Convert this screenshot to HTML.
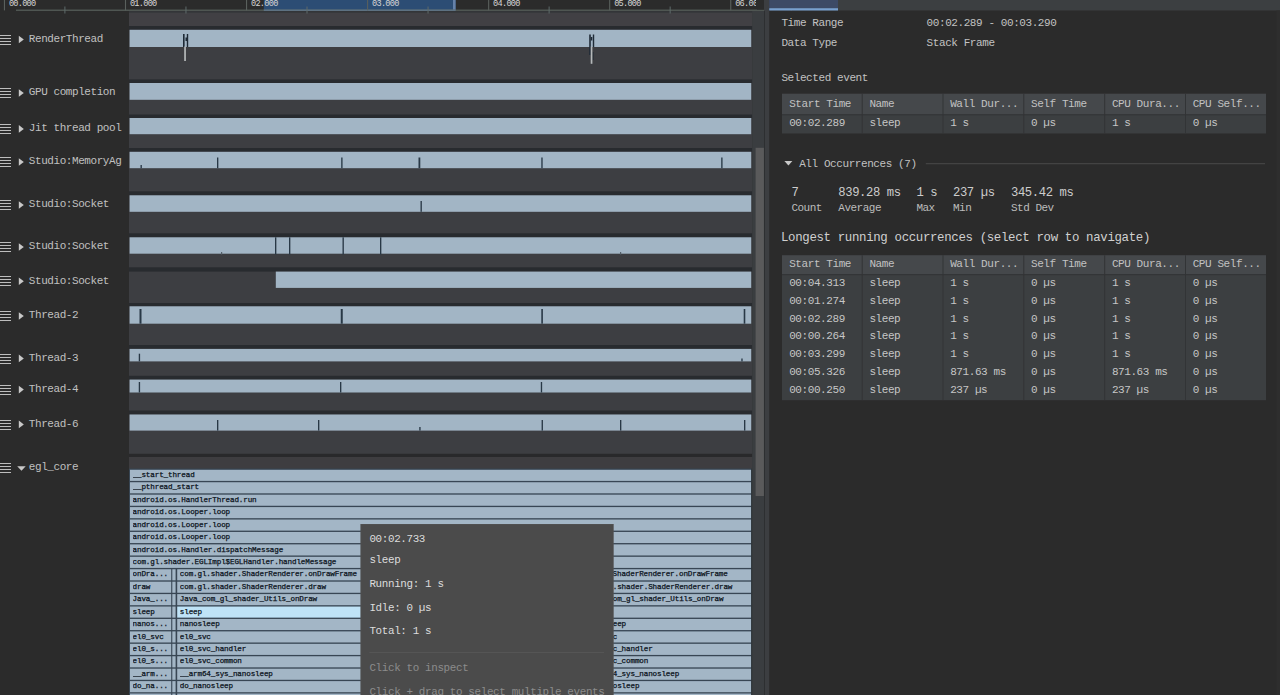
<!DOCTYPE html>
<html><head><meta charset="utf-8"><style>
html,body{margin:0;padding:0;width:1280px;height:695px;overflow:hidden;background:#2b2b2b}
div,span,svg{position:absolute;display:block}
span{font-family:"Liberation Mono", monospace;line-height:1;white-space:pre}
</style></head><body>
<svg width="1280" height="695" viewBox="0 0 1280 695" style="left:0;top:0"><rect x="0.00" y="0.00" width="1280.00" height="695.00" fill="#2b2b2b"/><rect x="129.00" y="11.00" width="623.20" height="684.00" fill="#3d3e42"/><rect x="129.00" y="11.00" width="623.60" height="15.00" fill="#414044"/><rect x="129.00" y="10.80" width="623.60" height="1.80" fill="#333538"/><rect x="263.80" y="0.00" width="191.80" height="10.40" fill="#2c4d74"/><rect x="453.00" y="0.00" width="2.60" height="10.40" fill="#6682aa"/><rect x="16.00" y="9.60" width="748.00" height="1.20" fill="#59615c"/><rect x="263.80" y="9.60" width="191.80" height="1.20" fill="#62788c"/><rect x="3.90" y="0.00" width="1.10" height="10.40" fill="#5a605d"/><rect x="64.40" y="6.50" width="1.00" height="7.00" fill="#5e6a6a"/><rect x="124.95" y="0.00" width="1.10" height="10.40" fill="#5a605d"/><rect x="185.45" y="6.50" width="1.00" height="7.00" fill="#5e6a6a"/><rect x="246.00" y="0.00" width="1.10" height="10.40" fill="#5a605d"/><rect x="306.50" y="6.50" width="1.00" height="7.00" fill="#5e6a6a"/><rect x="367.05" y="0.00" width="1.10" height="10.40" fill="#5a605d"/><rect x="427.55" y="6.50" width="1.00" height="7.00" fill="#5e6a6a"/><rect x="488.10" y="0.00" width="1.10" height="10.40" fill="#5a605d"/><rect x="548.60" y="6.50" width="1.00" height="7.00" fill="#5e6a6a"/><rect x="609.15" y="0.00" width="1.10" height="10.40" fill="#5a605d"/><rect x="669.65" y="6.50" width="1.00" height="7.00" fill="#5e6a6a"/><rect x="730.20" y="0.00" width="1.10" height="10.40" fill="#5a605d"/><rect x="790.70" y="6.50" width="1.00" height="7.00" fill="#5e6a6a"/><rect x="129.00" y="26.00" width="623.60" height="3.80" fill="#282b2f"/><rect x="129.60" y="29.80" width="621.60" height="17.20" fill="#a2b5c5"/><rect x="0.00" y="35.00" width="11.00" height="1.00" fill="#bdbdbd"/><rect x="0.00" y="38.00" width="11.00" height="1.00" fill="#bdbdbd"/><rect x="0.00" y="41.00" width="11.00" height="1.00" fill="#bdbdbd"/><rect x="0.00" y="44.00" width="11.00" height="1.00" fill="#bdbdbd"/><path d="M18.8 35.70 L23.8 39.50 L18.8 43.30 Z" fill="#c8c8c8"/><rect x="129.00" y="79.40" width="623.60" height="3.60" fill="#282b2f"/><rect x="129.60" y="83.00" width="621.60" height="16.80" fill="#a2b5c5"/><rect x="0.00" y="88.00" width="11.00" height="1.00" fill="#bdbdbd"/><rect x="0.00" y="91.00" width="11.00" height="1.00" fill="#bdbdbd"/><rect x="0.00" y="94.00" width="11.00" height="1.00" fill="#bdbdbd"/><rect x="0.00" y="97.00" width="11.00" height="1.00" fill="#bdbdbd"/><path d="M18.8 89.20 L23.8 93.00 L18.8 96.80 Z" fill="#c8c8c8"/><rect x="129.00" y="114.50" width="623.60" height="3.50" fill="#282b2f"/><rect x="129.60" y="118.00" width="621.60" height="16.20" fill="#a2b5c5"/><rect x="0.00" y="124.00" width="11.00" height="1.00" fill="#bdbdbd"/><rect x="0.00" y="127.00" width="11.00" height="1.00" fill="#bdbdbd"/><rect x="0.00" y="130.00" width="11.00" height="1.00" fill="#bdbdbd"/><rect x="0.00" y="133.00" width="11.00" height="1.00" fill="#bdbdbd"/><path d="M18.8 125.10 L23.8 128.90 L18.8 132.70 Z" fill="#c8c8c8"/><rect x="129.00" y="148.00" width="623.60" height="3.80" fill="#282b2f"/><rect x="129.60" y="151.80" width="621.60" height="16.40" fill="#a2b5c5"/><rect x="0.00" y="157.00" width="11.00" height="1.00" fill="#bdbdbd"/><rect x="0.00" y="160.00" width="11.00" height="1.00" fill="#bdbdbd"/><rect x="0.00" y="163.00" width="11.00" height="1.00" fill="#bdbdbd"/><rect x="0.00" y="166.00" width="11.00" height="1.00" fill="#bdbdbd"/><path d="M18.8 158.20 L23.8 162.00 L18.8 165.80 Z" fill="#c8c8c8"/><rect x="129.00" y="191.30" width="623.60" height="4.00" fill="#282b2f"/><rect x="129.60" y="195.30" width="621.60" height="16.50" fill="#a2b5c5"/><rect x="0.00" y="200.00" width="11.00" height="1.00" fill="#bdbdbd"/><rect x="0.00" y="203.00" width="11.00" height="1.00" fill="#bdbdbd"/><rect x="0.00" y="206.00" width="11.00" height="1.00" fill="#bdbdbd"/><rect x="0.00" y="209.00" width="11.00" height="1.00" fill="#bdbdbd"/><path d="M18.8 201.20 L23.8 205.00 L18.8 208.80 Z" fill="#c8c8c8"/><rect x="129.00" y="233.30" width="623.60" height="4.00" fill="#282b2f"/><rect x="129.60" y="237.30" width="621.60" height="16.40" fill="#a2b5c5"/><rect x="0.00" y="242.00" width="11.00" height="1.00" fill="#bdbdbd"/><rect x="0.00" y="245.00" width="11.00" height="1.00" fill="#bdbdbd"/><rect x="0.00" y="248.00" width="11.00" height="1.00" fill="#bdbdbd"/><rect x="0.00" y="251.00" width="11.00" height="1.00" fill="#bdbdbd"/><path d="M18.8 243.20 L23.8 247.00 L18.8 250.80 Z" fill="#c8c8c8"/><rect x="129.00" y="267.30" width="623.60" height="4.30" fill="#282b2f"/><rect x="275.80" y="271.60" width="475.40" height="16.30" fill="#a2b5c5"/><rect x="0.00" y="276.00" width="11.00" height="1.00" fill="#bdbdbd"/><rect x="0.00" y="279.00" width="11.00" height="1.00" fill="#bdbdbd"/><rect x="0.00" y="282.00" width="11.00" height="1.00" fill="#bdbdbd"/><rect x="0.00" y="285.00" width="11.00" height="1.00" fill="#bdbdbd"/><path d="M18.8 277.50 L23.8 281.30 L18.8 285.10 Z" fill="#c8c8c8"/><rect x="129.00" y="303.00" width="623.60" height="3.30" fill="#282b2f"/><rect x="129.60" y="306.30" width="621.60" height="17.40" fill="#a2b5c5"/><rect x="0.00" y="311.00" width="11.00" height="1.00" fill="#bdbdbd"/><rect x="0.00" y="314.00" width="11.00" height="1.00" fill="#bdbdbd"/><rect x="0.00" y="317.00" width="11.00" height="1.00" fill="#bdbdbd"/><rect x="0.00" y="320.00" width="11.00" height="1.00" fill="#bdbdbd"/><path d="M18.8 312.20 L23.8 316.00 L18.8 319.80 Z" fill="#c8c8c8"/><rect x="129.00" y="345.00" width="623.60" height="3.90" fill="#282b2f"/><rect x="129.60" y="348.90" width="621.60" height="12.50" fill="#a2b5c5"/><rect x="0.00" y="354.00" width="11.00" height="1.00" fill="#bdbdbd"/><rect x="0.00" y="357.00" width="11.00" height="1.00" fill="#bdbdbd"/><rect x="0.00" y="360.00" width="11.00" height="1.00" fill="#bdbdbd"/><rect x="0.00" y="363.00" width="11.00" height="1.00" fill="#bdbdbd"/><path d="M18.8 354.60 L23.8 358.40 L18.8 362.20 Z" fill="#c8c8c8"/><rect x="129.00" y="375.80" width="623.60" height="3.80" fill="#282b2f"/><rect x="129.60" y="379.60" width="621.60" height="12.90" fill="#a2b5c5"/><rect x="0.00" y="385.00" width="11.00" height="1.00" fill="#bdbdbd"/><rect x="0.00" y="388.00" width="11.00" height="1.00" fill="#bdbdbd"/><rect x="0.00" y="391.00" width="11.00" height="1.00" fill="#bdbdbd"/><rect x="0.00" y="394.00" width="11.00" height="1.00" fill="#bdbdbd"/><path d="M18.8 385.80 L23.8 389.60 L18.8 393.40 Z" fill="#c8c8c8"/><rect x="129.00" y="410.50" width="623.60" height="4.00" fill="#282b2f"/><rect x="129.60" y="414.50" width="621.60" height="16.10" fill="#a2b5c5"/><rect x="0.00" y="420.00" width="11.00" height="1.00" fill="#bdbdbd"/><rect x="0.00" y="423.00" width="11.00" height="1.00" fill="#bdbdbd"/><rect x="0.00" y="426.00" width="11.00" height="1.00" fill="#bdbdbd"/><rect x="0.00" y="429.00" width="11.00" height="1.00" fill="#bdbdbd"/><path d="M18.8 420.60 L23.8 424.40 L18.8 428.20 Z" fill="#c8c8c8"/><rect x="183.00" y="34.00" width="1.60" height="13.00" fill="#1e2a36"/><rect x="186.80" y="34.00" width="1.40" height="13.00" fill="#1e2a36"/><rect x="185.50" y="37.50" width="2.50" height="3.50" fill="#1e2a36"/><rect x="589.20" y="34.50" width="1.60" height="20.50" fill="#1e2a36"/><rect x="592.80" y="34.50" width="1.40" height="12.50" fill="#1e2a36"/><rect x="590.80" y="37.00" width="1.50" height="3.50" fill="#1e2a36"/><rect x="592.50" y="52.00" width="1.30" height="8.00" fill="#2a3038"/><rect x="140.50" y="165.00" width="1.35" height="3.20" fill="#283846"/><rect x="217.00" y="157.50" width="1.35" height="10.70" fill="#283846"/><rect x="341.20" y="157.50" width="1.35" height="10.70" fill="#283846"/><rect x="418.50" y="157.50" width="1.80" height="10.70" fill="#283846"/><rect x="541.30" y="157.50" width="1.35" height="10.70" fill="#283846"/><rect x="721.20" y="157.50" width="1.35" height="10.70" fill="#283846"/><rect x="420.50" y="201.00" width="1.35" height="10.80" fill="#283846"/><rect x="275.00" y="237.30" width="1.35" height="17.20" fill="#283846"/><rect x="289.00" y="237.30" width="1.35" height="17.20" fill="#283846"/><rect x="342.50" y="237.30" width="1.35" height="17.20" fill="#283846"/><rect x="380.00" y="237.30" width="1.35" height="17.20" fill="#283846"/><rect x="221.00" y="252.00" width="1.20" height="2.50" fill="#55606a"/><rect x="620.00" y="252.00" width="1.20" height="2.50" fill="#55606a"/><rect x="139.50" y="309.00" width="2.00" height="14.70" fill="#283846"/><rect x="340.75" y="309.00" width="2.00" height="14.70" fill="#283846"/><rect x="541.30" y="309.00" width="1.60" height="14.70" fill="#283846"/><rect x="743.70" y="309.00" width="1.60" height="14.70" fill="#283846"/><rect x="138.75" y="353.70" width="1.35" height="7.70" fill="#283846"/><rect x="741.30" y="358.50" width="1.35" height="2.90" fill="#283846"/><rect x="138.75" y="382.00" width="1.35" height="10.50" fill="#283846"/><rect x="340.00" y="382.00" width="1.35" height="10.50" fill="#283846"/><rect x="540.80" y="382.00" width="1.35" height="10.50" fill="#283846"/><rect x="217.00" y="420.00" width="1.35" height="10.60" fill="#283846"/><rect x="318.00" y="420.00" width="1.35" height="10.60" fill="#283846"/><rect x="419.25" y="427.00" width="1.35" height="3.60" fill="#283846"/><rect x="541.60" y="420.00" width="1.35" height="10.60" fill="#283846"/><rect x="620.00" y="420.00" width="1.35" height="10.60" fill="#283846"/><rect x="744.00" y="420.00" width="1.35" height="10.60" fill="#283846"/><rect x="184.20" y="46.60" width="1.70" height="14.40" fill="#b5b8ba"/><rect x="590.70" y="46.60" width="1.70" height="17.20" fill="#b5b8ba"/><rect x="129.00" y="453.80" width="623.60" height="3.20" fill="#29292b"/><rect x="129.00" y="457.00" width="623.60" height="11.60" fill="#3e3d40"/><rect x="129.00" y="468.60" width="622.20" height="226.40" fill="#384654"/><rect x="0.00" y="463.00" width="11.00" height="1.00" fill="#bdbdbd"/><rect x="0.00" y="466.00" width="11.00" height="1.00" fill="#bdbdbd"/><rect x="0.00" y="469.00" width="11.00" height="1.00" fill="#bdbdbd"/><rect x="0.00" y="472.00" width="11.00" height="1.00" fill="#bdbdbd"/><path d="M17.2 466.3 L25.7 466.3 L21.45 470.8 Z" fill="#c8c8c8"/><rect x="130.00" y="469.80" width="621.20" height="11.10" fill="#a3b6c6"/><rect x="130.00" y="482.23" width="621.20" height="11.10" fill="#a3b6c6"/><rect x="130.00" y="494.66" width="621.20" height="11.10" fill="#a3b6c6"/><rect x="130.00" y="507.09" width="621.20" height="11.10" fill="#a3b6c6"/><rect x="130.00" y="519.52" width="621.20" height="11.10" fill="#a3b6c6"/><rect x="130.00" y="531.95" width="621.20" height="11.10" fill="#a3b6c6"/><rect x="130.00" y="544.38" width="621.20" height="11.10" fill="#a3b6c6"/><rect x="130.00" y="556.81" width="621.20" height="11.10" fill="#a3b6c6"/><rect x="130.00" y="569.24" width="41.20" height="11.10" fill="#a3b6c6"/><rect x="172.30" y="569.24" width="3.30" height="11.10" fill="#a3b6c6"/><rect x="177.20" y="569.24" width="322.80" height="11.10" fill="#a3b6c6"/><rect x="548.00" y="569.24" width="203.20" height="11.10" fill="#a3b6c6"/><rect x="130.00" y="581.67" width="41.20" height="11.10" fill="#a3b6c6"/><rect x="172.30" y="581.67" width="3.30" height="11.10" fill="#a3b6c6"/><rect x="177.20" y="581.67" width="322.80" height="11.10" fill="#a3b6c6"/><rect x="583.60" y="581.67" width="167.60" height="11.10" fill="#a3b6c6"/><rect x="130.00" y="594.10" width="41.20" height="11.10" fill="#a3b6c6"/><rect x="172.30" y="594.10" width="3.30" height="11.10" fill="#a3b6c6"/><rect x="177.20" y="594.10" width="322.80" height="11.10" fill="#a3b6c6"/><rect x="583.60" y="594.10" width="167.60" height="11.10" fill="#a3b6c6"/><rect x="130.00" y="606.53" width="41.20" height="11.10" fill="#a3b6c6"/><rect x="172.30" y="606.53" width="3.30" height="11.10" fill="#a3b6c6"/><rect x="177.20" y="606.53" width="322.80" height="11.10" fill="#bfe3f7"/><rect x="583.60" y="606.53" width="167.60" height="11.10" fill="#a3b6c6"/><rect x="130.00" y="618.96" width="41.20" height="11.10" fill="#a3b6c6"/><rect x="172.30" y="618.96" width="3.30" height="11.10" fill="#a3b6c6"/><rect x="177.20" y="618.96" width="322.80" height="11.10" fill="#a3b6c6"/><rect x="583.60" y="618.96" width="167.60" height="11.10" fill="#a3b6c6"/><rect x="130.00" y="631.39" width="41.20" height="11.10" fill="#a3b6c6"/><rect x="172.30" y="631.39" width="3.30" height="11.10" fill="#a3b6c6"/><rect x="177.20" y="631.39" width="322.80" height="11.10" fill="#a3b6c6"/><rect x="583.60" y="631.39" width="167.60" height="11.10" fill="#a3b6c6"/><rect x="130.00" y="643.82" width="41.20" height="11.10" fill="#a3b6c6"/><rect x="172.30" y="643.82" width="3.30" height="11.10" fill="#a3b6c6"/><rect x="177.20" y="643.82" width="322.80" height="11.10" fill="#a3b6c6"/><rect x="583.60" y="643.82" width="167.60" height="11.10" fill="#a3b6c6"/><rect x="130.00" y="656.25" width="41.20" height="11.10" fill="#a3b6c6"/><rect x="172.30" y="656.25" width="3.30" height="11.10" fill="#a3b6c6"/><rect x="177.20" y="656.25" width="322.80" height="11.10" fill="#a3b6c6"/><rect x="583.60" y="656.25" width="167.60" height="11.10" fill="#a3b6c6"/><rect x="130.00" y="668.68" width="41.20" height="11.10" fill="#a3b6c6"/><rect x="172.30" y="668.68" width="3.30" height="11.10" fill="#a3b6c6"/><rect x="177.20" y="668.68" width="322.80" height="11.10" fill="#a3b6c6"/><rect x="583.60" y="668.68" width="167.60" height="11.10" fill="#a3b6c6"/><rect x="130.00" y="681.11" width="41.20" height="11.10" fill="#a3b6c6"/><rect x="172.30" y="681.11" width="3.30" height="11.10" fill="#a3b6c6"/><rect x="177.20" y="681.11" width="322.80" height="11.10" fill="#a3b6c6"/><rect x="583.60" y="681.11" width="167.60" height="11.10" fill="#a3b6c6"/><rect x="130.00" y="693.54" width="41.20" height="11.10" fill="#a3b6c6"/><rect x="172.30" y="693.54" width="3.30" height="11.10" fill="#a3b6c6"/><rect x="177.20" y="693.54" width="322.80" height="11.10" fill="#a3b6c6"/><rect x="583.60" y="693.54" width="167.60" height="11.10" fill="#a3b6c6"/></svg>
<span style="left:8.90px;top:0.30px;font-size:8.6px;color:#d6d6d6;letter-spacing:-0.73px">00.000</span>
<span style="left:129.95px;top:0.30px;font-size:8.6px;color:#d6d6d6;letter-spacing:-0.73px">01.000</span>
<span style="left:251.00px;top:0.30px;font-size:8.6px;color:#d6d6d6;letter-spacing:-0.73px">02.000</span>
<span style="left:372.05px;top:0.30px;font-size:8.6px;color:#d6d6d6;letter-spacing:-0.73px">03.000</span>
<span style="left:493.10px;top:0.30px;font-size:8.6px;color:#d6d6d6;letter-spacing:-0.73px">04.000</span>
<span style="left:614.15px;top:0.30px;font-size:8.6px;color:#d6d6d6;letter-spacing:-0.73px">05.000</span>
<span style="left:735.20px;top:0.30px;font-size:8.6px;color:#d6d6d6;letter-spacing:-0.73px;width:20.5px;overflow:hidden">06.000</span>
<span style="left:28.80px;top:33.90px;font-size:11.0px;color:#c0c0c0;letter-spacing:-0.43px">RenderThread</span>
<span style="left:28.80px;top:87.40px;font-size:11.0px;color:#c0c0c0;letter-spacing:-0.43px">GPU completion</span>
<span style="left:28.80px;top:123.30px;font-size:11.0px;color:#c0c0c0;letter-spacing:-0.43px">Jit thread pool</span>
<span style="left:28.80px;top:156.40px;font-size:11.0px;color:#c0c0c0;letter-spacing:-0.43px">Studio:MemoryAg</span>
<span style="left:28.80px;top:199.40px;font-size:11.0px;color:#c0c0c0;letter-spacing:-0.43px">Studio:Socket</span>
<span style="left:28.80px;top:241.40px;font-size:11.0px;color:#c0c0c0;letter-spacing:-0.43px">Studio:Socket</span>
<span style="left:28.80px;top:275.70px;font-size:11.0px;color:#c0c0c0;letter-spacing:-0.43px">Studio:Socket</span>
<span style="left:28.80px;top:310.40px;font-size:11.0px;color:#c0c0c0;letter-spacing:-0.43px">Thread-2</span>
<span style="left:28.80px;top:352.80px;font-size:11.0px;color:#c0c0c0;letter-spacing:-0.43px">Thread-3</span>
<span style="left:28.80px;top:384.00px;font-size:11.0px;color:#c0c0c0;letter-spacing:-0.43px">Thread-4</span>
<span style="left:28.80px;top:418.80px;font-size:11.0px;color:#c0c0c0;letter-spacing:-0.43px">Thread-6</span>
<span style="left:28.80px;top:462.40px;font-size:11.0px;color:#c0c0c0;letter-spacing:-0.43px">egl_core</span>
<span style="left:132.60px;top:472.00px;font-size:7.6px;color:#0c141c;letter-spacing:-0.130px;-webkit-text-stroke:0.25px #0c141c;width:618.60px;overflow:hidden;white-space:nowrap">__start_thread</span>
<span style="left:132.60px;top:484.43px;font-size:7.6px;color:#0c141c;letter-spacing:-0.130px;-webkit-text-stroke:0.25px #0c141c;width:618.60px;overflow:hidden;white-space:nowrap">__pthread_start</span>
<span style="left:132.60px;top:496.86px;font-size:7.6px;color:#0c141c;letter-spacing:-0.130px;-webkit-text-stroke:0.25px #0c141c;width:618.60px;overflow:hidden;white-space:nowrap">android.os.HandlerThread.run</span>
<span style="left:132.60px;top:509.29px;font-size:7.6px;color:#0c141c;letter-spacing:-0.130px;-webkit-text-stroke:0.25px #0c141c;width:618.60px;overflow:hidden;white-space:nowrap">android.os.Looper.loop</span>
<span style="left:132.60px;top:521.72px;font-size:7.6px;color:#0c141c;letter-spacing:-0.130px;-webkit-text-stroke:0.25px #0c141c;width:618.60px;overflow:hidden;white-space:nowrap">android.os.Looper.loop</span>
<span style="left:132.60px;top:534.15px;font-size:7.6px;color:#0c141c;letter-spacing:-0.130px;-webkit-text-stroke:0.25px #0c141c;width:618.60px;overflow:hidden;white-space:nowrap">android.os.Looper.loop</span>
<span style="left:132.60px;top:546.58px;font-size:7.6px;color:#0c141c;letter-spacing:-0.130px;-webkit-text-stroke:0.25px #0c141c;width:618.60px;overflow:hidden;white-space:nowrap">android.os.Handler.dispatchMessage</span>
<span style="left:132.60px;top:559.01px;font-size:7.6px;color:#0c141c;letter-spacing:-0.130px;-webkit-text-stroke:0.25px #0c141c;width:618.60px;overflow:hidden;white-space:nowrap">com.gl.shader.EGLImpl$EGLHandler.handleMessage</span>
<span style="left:132.60px;top:571.44px;font-size:7.6px;color:#0c141c;letter-spacing:-0.130px;-webkit-text-stroke:0.25px #0c141c;width:38.60px;overflow:hidden;white-space:nowrap">onDra...</span>
<span style="left:179.80px;top:571.44px;font-size:7.6px;color:#0c141c;letter-spacing:-0.130px;-webkit-text-stroke:0.25px #0c141c;width:320.20px;overflow:hidden;white-space:nowrap">com.gl.shader.ShaderRenderer.onDrawFrame</span>
<span style="left:550.60px;top:571.44px;font-size:7.6px;color:#0c141c;letter-spacing:-0.130px;-webkit-text-stroke:0.25px #0c141c;width:200.60px;overflow:hidden;white-space:nowrap">com.gl.shader.ShaderRenderer.onDrawFrame</span>
<span style="left:132.60px;top:583.87px;font-size:7.6px;color:#0c141c;letter-spacing:-0.130px;-webkit-text-stroke:0.25px #0c141c;width:38.60px;overflow:hidden;white-space:nowrap">draw</span>
<span style="left:179.80px;top:583.87px;font-size:7.6px;color:#0c141c;letter-spacing:-0.130px;-webkit-text-stroke:0.25px #0c141c;width:320.20px;overflow:hidden;white-space:nowrap">com.gl.shader.ShaderRenderer.draw</span>
<span style="left:586.20px;top:583.87px;font-size:7.6px;color:#0c141c;letter-spacing:-0.130px;-webkit-text-stroke:0.25px #0c141c;width:165.00px;overflow:hidden;white-space:nowrap">com.gl.shader.ShaderRenderer.draw</span>
<span style="left:132.60px;top:596.30px;font-size:7.6px;color:#0c141c;letter-spacing:-0.130px;-webkit-text-stroke:0.25px #0c141c;width:38.60px;overflow:hidden;white-space:nowrap">Java_...</span>
<span style="left:179.80px;top:596.30px;font-size:7.6px;color:#0c141c;letter-spacing:-0.130px;-webkit-text-stroke:0.25px #0c141c;width:320.20px;overflow:hidden;white-space:nowrap">Java_com_gl_shader_Utils_onDraw</span>
<span style="left:586.20px;top:596.30px;font-size:7.6px;color:#0c141c;letter-spacing:-0.130px;-webkit-text-stroke:0.25px #0c141c;width:165.00px;overflow:hidden;white-space:nowrap">Java_com_gl_shader_Utils_onDraw</span>
<span style="left:132.60px;top:608.73px;font-size:7.6px;color:#0c141c;letter-spacing:-0.130px;-webkit-text-stroke:0.25px #0c141c;width:38.60px;overflow:hidden;white-space:nowrap">sleep</span>
<span style="left:179.80px;top:608.73px;font-size:7.6px;color:#0c141c;letter-spacing:-0.130px;-webkit-text-stroke:0.25px #0c141c;width:320.20px;overflow:hidden;white-space:nowrap">sleep</span>
<span style="left:586.20px;top:608.73px;font-size:7.6px;color:#0c141c;letter-spacing:-0.130px;-webkit-text-stroke:0.25px #0c141c;width:165.00px;overflow:hidden;white-space:nowrap">sleep</span>
<span style="left:132.60px;top:621.16px;font-size:7.6px;color:#0c141c;letter-spacing:-0.130px;-webkit-text-stroke:0.25px #0c141c;width:38.60px;overflow:hidden;white-space:nowrap">nanos...</span>
<span style="left:179.80px;top:621.16px;font-size:7.6px;color:#0c141c;letter-spacing:-0.130px;-webkit-text-stroke:0.25px #0c141c;width:320.20px;overflow:hidden;white-space:nowrap">nanosleep</span>
<span style="left:586.20px;top:621.16px;font-size:7.6px;color:#0c141c;letter-spacing:-0.130px;-webkit-text-stroke:0.25px #0c141c;width:165.00px;overflow:hidden;white-space:nowrap">nanosleep</span>
<span style="left:132.60px;top:633.59px;font-size:7.6px;color:#0c141c;letter-spacing:-0.130px;-webkit-text-stroke:0.25px #0c141c;width:38.60px;overflow:hidden;white-space:nowrap">el0_svc</span>
<span style="left:179.80px;top:633.59px;font-size:7.6px;color:#0c141c;letter-spacing:-0.130px;-webkit-text-stroke:0.25px #0c141c;width:320.20px;overflow:hidden;white-space:nowrap">el0_svc</span>
<span style="left:586.20px;top:633.59px;font-size:7.6px;color:#0c141c;letter-spacing:-0.130px;-webkit-text-stroke:0.25px #0c141c;width:165.00px;overflow:hidden;white-space:nowrap">el0_svc</span>
<span style="left:132.60px;top:646.02px;font-size:7.6px;color:#0c141c;letter-spacing:-0.130px;-webkit-text-stroke:0.25px #0c141c;width:38.60px;overflow:hidden;white-space:nowrap">el0_s...</span>
<span style="left:179.80px;top:646.02px;font-size:7.6px;color:#0c141c;letter-spacing:-0.130px;-webkit-text-stroke:0.25px #0c141c;width:320.20px;overflow:hidden;white-space:nowrap">el0_svc_handler</span>
<span style="left:586.20px;top:646.02px;font-size:7.6px;color:#0c141c;letter-spacing:-0.130px;-webkit-text-stroke:0.25px #0c141c;width:165.00px;overflow:hidden;white-space:nowrap">el0_svc_handler</span>
<span style="left:132.60px;top:658.45px;font-size:7.6px;color:#0c141c;letter-spacing:-0.130px;-webkit-text-stroke:0.25px #0c141c;width:38.60px;overflow:hidden;white-space:nowrap">el0_s...</span>
<span style="left:179.80px;top:658.45px;font-size:7.6px;color:#0c141c;letter-spacing:-0.130px;-webkit-text-stroke:0.25px #0c141c;width:320.20px;overflow:hidden;white-space:nowrap">el0_svc_common</span>
<span style="left:586.20px;top:658.45px;font-size:7.6px;color:#0c141c;letter-spacing:-0.130px;-webkit-text-stroke:0.25px #0c141c;width:165.00px;overflow:hidden;white-space:nowrap">el0_svc_common</span>
<span style="left:132.60px;top:670.88px;font-size:7.6px;color:#0c141c;letter-spacing:-0.130px;-webkit-text-stroke:0.25px #0c141c;width:38.60px;overflow:hidden;white-space:nowrap">__arm...</span>
<span style="left:179.80px;top:670.88px;font-size:7.6px;color:#0c141c;letter-spacing:-0.130px;-webkit-text-stroke:0.25px #0c141c;width:320.20px;overflow:hidden;white-space:nowrap">__arm64_sys_nanosleep</span>
<span style="left:586.20px;top:670.88px;font-size:7.6px;color:#0c141c;letter-spacing:-0.130px;-webkit-text-stroke:0.25px #0c141c;width:165.00px;overflow:hidden;white-space:nowrap">__arm64_sys_nanosleep</span>
<span style="left:132.60px;top:683.31px;font-size:7.6px;color:#0c141c;letter-spacing:-0.130px;-webkit-text-stroke:0.25px #0c141c;width:38.60px;overflow:hidden;white-space:nowrap">do_na...</span>
<span style="left:179.80px;top:683.31px;font-size:7.6px;color:#0c141c;letter-spacing:-0.130px;-webkit-text-stroke:0.25px #0c141c;width:320.20px;overflow:hidden;white-space:nowrap">do_nanosleep</span>
<span style="left:586.20px;top:683.31px;font-size:7.6px;color:#0c141c;letter-spacing:-0.130px;-webkit-text-stroke:0.25px #0c141c;width:165.00px;overflow:hidden;white-space:nowrap">do_nanosleep</span>
<span style="left:132.60px;top:695.74px;font-size:7.6px;color:#0c141c;letter-spacing:-0.130px;-webkit-text-stroke:0.25px #0c141c;width:38.60px;overflow:hidden;white-space:nowrap">schedule</span>
<span style="left:179.80px;top:695.74px;font-size:7.6px;color:#0c141c;letter-spacing:-0.130px;-webkit-text-stroke:0.25px #0c141c;width:320.20px;overflow:hidden;white-space:nowrap">schedule</span>
<span style="left:586.20px;top:695.74px;font-size:7.6px;color:#0c141c;letter-spacing:-0.130px;-webkit-text-stroke:0.25px #0c141c;width:165.00px;overflow:hidden;white-space:nowrap">schedule</span>
<svg width="1280" height="695" viewBox="0 0 1280 695" style="left:0;top:0"><rect x="360.40" y="524.00" width="253.30" height="171.00" fill="#525252"/><rect x="361.20" y="524.80" width="251.70" height="170.20" fill="#4b4b4b"/><rect x="369.40" y="652.00" width="234.60" height="1.00" fill="#555555"/><rect x="751.20" y="468.60" width="1.00" height="226.40" fill="#2c333a"/><rect x="752.20" y="11.00" width="11.80" height="684.00" fill="#3a3d40"/><rect x="755.60" y="147.80" width="8.30" height="348.20" fill="#5a5a5b"/><rect x="757.00" y="0.00" width="7.00" height="9.60" fill="#2b2b2b"/><rect x="764.00" y="0.00" width="5.20" height="695.00" fill="#3c3e41"/><rect x="764.00" y="11.00" width="1.00" height="684.00" fill="#2d2f31"/><rect x="770.00" y="10.50" width="510.00" height="684.50" fill="#2b2b2b"/><rect x="770.00" y="0.00" width="510.00" height="10.50" fill="#3c3f41"/><rect x="769.20" y="0.00" width="68.80" height="8.20" fill="#3d4a66"/><rect x="769.20" y="8.20" width="68.80" height="2.30" fill="#78a0d0"/><rect x="1276.50" y="10.50" width="3.50" height="684.50" fill="#2e2e2e"/><rect x="782.00" y="93.70" width="484.00" height="21.10" fill="#45484b"/><rect x="782.00" y="114.80" width="484.00" height="18.70" fill="#3c3f41"/><rect x="861.70" y="93.70" width="1.00" height="39.80" fill="#323436"/><rect x="942.50" y="93.70" width="1.00" height="39.80" fill="#323436"/><rect x="1023.30" y="93.70" width="1.00" height="39.80" fill="#323436"/><rect x="1104.20" y="93.70" width="1.00" height="39.80" fill="#323436"/><rect x="1185.00" y="93.70" width="1.00" height="39.80" fill="#323436"/><rect x="782.00" y="114.30" width="484.00" height="1.00" fill="#323436"/><path d="M784.4 161 L792.4 161 L788.4 165.6 Z" fill="#c8c8c8"/><rect x="925.80" y="163.20" width="339.20" height="1.00" fill="#4a4a4a"/><rect x="782.00" y="255.20" width="484.00" height="19.50" fill="#45484b"/><rect x="782.00" y="274.70" width="484.00" height="125.50" fill="#3c3f41"/><rect x="861.70" y="255.20" width="1.00" height="145.00" fill="#323436"/><rect x="942.50" y="255.20" width="1.00" height="145.00" fill="#323436"/><rect x="1023.30" y="255.20" width="1.00" height="145.00" fill="#323436"/><rect x="1104.20" y="255.20" width="1.00" height="145.00" fill="#323436"/><rect x="1185.00" y="255.20" width="1.00" height="145.00" fill="#323436"/><rect x="782.00" y="274.20" width="484.00" height="1.00" fill="#323436"/></svg>
<span style="left:369.40px;top:534.40px;font-size:10.9px;color:#dcdcdc;letter-spacing:-0.350px">00:02.733</span>
<span style="left:369.40px;top:554.50px;font-size:10.9px;color:#dcdcdc;letter-spacing:-0.350px">sleep</span>
<span style="left:369.40px;top:578.50px;font-size:10.9px;color:#dcdcdc;letter-spacing:-0.350px">Running: 1 s</span>
<span style="left:369.40px;top:602.50px;font-size:10.9px;color:#dcdcdc;letter-spacing:-0.350px">Idle: 0 µs</span>
<span style="left:369.40px;top:626.00px;font-size:10.9px;color:#dcdcdc;letter-spacing:-0.350px">Total: 1 s</span>
<span style="left:369.40px;top:662.70px;font-size:10.9px;color:#8c8c8c;letter-spacing:-0.350px">Click to inspect</span>
<span style="left:369.40px;top:686.50px;font-size:10.9px;color:#8c8c8c;letter-spacing:-0.350px">Click + drag to select multiple events</span>
<span style="left:781.40px;top:17.80px;font-size:11.0px;color:#c2c2c2;letter-spacing:-0.420px">Time Range</span>
<span style="left:926.60px;top:17.80px;font-size:11.0px;color:#c2c2c2;letter-spacing:-0.420px">00:02.289 - 00:03.290</span>
<span style="left:781.40px;top:37.70px;font-size:11.0px;color:#c2c2c2;letter-spacing:-0.420px">Data Type</span>
<span style="left:926.60px;top:37.70px;font-size:11.0px;color:#c2c2c2;letter-spacing:-0.420px">Stack Frame</span>
<span style="left:781.40px;top:73.00px;font-size:11.0px;color:#c2c2c2;letter-spacing:-0.420px">Selected event</span>
<span style="left:789.20px;top:99.20px;font-size:11.0px;color:#c2c2c2;letter-spacing:-0.420px">Start Time</span>
<span style="left:869.40px;top:99.20px;font-size:11.0px;color:#c2c2c2;letter-spacing:-0.420px">Name</span>
<span style="left:950.20px;top:99.20px;font-size:11.0px;color:#c2c2c2;letter-spacing:-0.420px">Wall Dur...</span>
<span style="left:1031.00px;top:99.20px;font-size:11.0px;color:#c2c2c2;letter-spacing:-0.420px">Self Time</span>
<span style="left:1111.90px;top:99.20px;font-size:11.0px;color:#c2c2c2;letter-spacing:-0.420px">CPU Dura...</span>
<span style="left:1192.70px;top:99.20px;font-size:11.0px;color:#c2c2c2;letter-spacing:-0.420px">CPU Self...</span>
<span style="left:789.20px;top:118.00px;font-size:11.0px;color:#c6c6c6;letter-spacing:-0.420px">00:02.289</span>
<span style="left:869.40px;top:118.00px;font-size:11.0px;color:#c6c6c6;letter-spacing:-0.420px">sleep</span>
<span style="left:950.20px;top:118.00px;font-size:11.0px;color:#c6c6c6;letter-spacing:-0.420px">1 s</span>
<span style="left:1031.00px;top:118.00px;font-size:11.0px;color:#c6c6c6;letter-spacing:-0.420px">0 µs</span>
<span style="left:1111.90px;top:118.00px;font-size:11.0px;color:#c6c6c6;letter-spacing:-0.420px">1 s</span>
<span style="left:1192.70px;top:118.00px;font-size:11.0px;color:#c6c6c6;letter-spacing:-0.420px">0 µs</span>
<span style="left:799.20px;top:158.50px;font-size:11.0px;color:#c2c2c2;letter-spacing:-0.420px">All Occurrences (7)</span>
<span style="left:791.40px;top:186.90px;font-size:12.2px;color:#cdcdcd;letter-spacing:-0.380px">7</span>
<span style="left:838.30px;top:186.90px;font-size:12.2px;color:#cdcdcd;letter-spacing:-0.380px">839.28 ms</span>
<span style="left:916.40px;top:186.90px;font-size:12.2px;color:#cdcdcd;letter-spacing:-0.380px">1 s</span>
<span style="left:953.00px;top:186.90px;font-size:12.2px;color:#cdcdcd;letter-spacing:-0.380px">237 µs</span>
<span style="left:1011.00px;top:186.90px;font-size:12.2px;color:#cdcdcd;letter-spacing:-0.380px">345.42 ms</span>
<span style="left:791.40px;top:203.20px;font-size:11.0px;color:#bcbcbc;letter-spacing:-0.500px">Count</span>
<span style="left:838.30px;top:203.20px;font-size:11.0px;color:#bcbcbc;letter-spacing:-0.500px">Average</span>
<span style="left:916.40px;top:203.20px;font-size:11.0px;color:#bcbcbc;letter-spacing:-0.500px">Max</span>
<span style="left:953.00px;top:203.20px;font-size:11.0px;color:#bcbcbc;letter-spacing:-0.500px">Min</span>
<span style="left:1011.00px;top:203.20px;font-size:11.0px;color:#bcbcbc;letter-spacing:-0.500px">Std Dev</span>
<span style="left:781.00px;top:231.80px;font-size:12.4px;color:#d0d0d0;letter-spacing:-0.340px">Longest running occurrences (select row to navigate)</span>
<span style="left:789.20px;top:259.40px;font-size:11.0px;color:#c2c2c2;letter-spacing:-0.420px">Start Time</span>
<span style="left:869.40px;top:259.40px;font-size:11.0px;color:#c2c2c2;letter-spacing:-0.420px">Name</span>
<span style="left:950.20px;top:259.40px;font-size:11.0px;color:#c2c2c2;letter-spacing:-0.420px">Wall Dur...</span>
<span style="left:1031.00px;top:259.40px;font-size:11.0px;color:#c2c2c2;letter-spacing:-0.420px">Self Time</span>
<span style="left:1111.90px;top:259.40px;font-size:11.0px;color:#c2c2c2;letter-spacing:-0.420px">CPU Dura...</span>
<span style="left:1192.70px;top:259.40px;font-size:11.0px;color:#c2c2c2;letter-spacing:-0.420px">CPU Self...</span>
<span style="left:789.20px;top:278.00px;font-size:11.0px;color:#c6c6c6;letter-spacing:-0.420px">00:04.313</span>
<span style="left:869.40px;top:278.00px;font-size:11.0px;color:#c6c6c6;letter-spacing:-0.420px">sleep</span>
<span style="left:950.20px;top:278.00px;font-size:11.0px;color:#c6c6c6;letter-spacing:-0.420px">1 s</span>
<span style="left:1031.00px;top:278.00px;font-size:11.0px;color:#c6c6c6;letter-spacing:-0.420px">0 µs</span>
<span style="left:1111.90px;top:278.00px;font-size:11.0px;color:#c6c6c6;letter-spacing:-0.420px">1 s</span>
<span style="left:1192.70px;top:278.00px;font-size:11.0px;color:#c6c6c6;letter-spacing:-0.420px">0 µs</span>
<span style="left:789.20px;top:295.80px;font-size:11.0px;color:#c6c6c6;letter-spacing:-0.420px">00:01.274</span>
<span style="left:869.40px;top:295.80px;font-size:11.0px;color:#c6c6c6;letter-spacing:-0.420px">sleep</span>
<span style="left:950.20px;top:295.80px;font-size:11.0px;color:#c6c6c6;letter-spacing:-0.420px">1 s</span>
<span style="left:1031.00px;top:295.80px;font-size:11.0px;color:#c6c6c6;letter-spacing:-0.420px">0 µs</span>
<span style="left:1111.90px;top:295.80px;font-size:11.0px;color:#c6c6c6;letter-spacing:-0.420px">1 s</span>
<span style="left:1192.70px;top:295.80px;font-size:11.0px;color:#c6c6c6;letter-spacing:-0.420px">0 µs</span>
<span style="left:789.20px;top:313.60px;font-size:11.0px;color:#c6c6c6;letter-spacing:-0.420px">00:02.289</span>
<span style="left:869.40px;top:313.60px;font-size:11.0px;color:#c6c6c6;letter-spacing:-0.420px">sleep</span>
<span style="left:950.20px;top:313.60px;font-size:11.0px;color:#c6c6c6;letter-spacing:-0.420px">1 s</span>
<span style="left:1031.00px;top:313.60px;font-size:11.0px;color:#c6c6c6;letter-spacing:-0.420px">0 µs</span>
<span style="left:1111.90px;top:313.60px;font-size:11.0px;color:#c6c6c6;letter-spacing:-0.420px">1 s</span>
<span style="left:1192.70px;top:313.60px;font-size:11.0px;color:#c6c6c6;letter-spacing:-0.420px">0 µs</span>
<span style="left:789.20px;top:331.40px;font-size:11.0px;color:#c6c6c6;letter-spacing:-0.420px">00:00.264</span>
<span style="left:869.40px;top:331.40px;font-size:11.0px;color:#c6c6c6;letter-spacing:-0.420px">sleep</span>
<span style="left:950.20px;top:331.40px;font-size:11.0px;color:#c6c6c6;letter-spacing:-0.420px">1 s</span>
<span style="left:1031.00px;top:331.40px;font-size:11.0px;color:#c6c6c6;letter-spacing:-0.420px">0 µs</span>
<span style="left:1111.90px;top:331.40px;font-size:11.0px;color:#c6c6c6;letter-spacing:-0.420px">1 s</span>
<span style="left:1192.70px;top:331.40px;font-size:11.0px;color:#c6c6c6;letter-spacing:-0.420px">0 µs</span>
<span style="left:789.20px;top:349.20px;font-size:11.0px;color:#c6c6c6;letter-spacing:-0.420px">00:03.299</span>
<span style="left:869.40px;top:349.20px;font-size:11.0px;color:#c6c6c6;letter-spacing:-0.420px">sleep</span>
<span style="left:950.20px;top:349.20px;font-size:11.0px;color:#c6c6c6;letter-spacing:-0.420px">1 s</span>
<span style="left:1031.00px;top:349.20px;font-size:11.0px;color:#c6c6c6;letter-spacing:-0.420px">0 µs</span>
<span style="left:1111.90px;top:349.20px;font-size:11.0px;color:#c6c6c6;letter-spacing:-0.420px">1 s</span>
<span style="left:1192.70px;top:349.20px;font-size:11.0px;color:#c6c6c6;letter-spacing:-0.420px">0 µs</span>
<span style="left:789.20px;top:367.00px;font-size:11.0px;color:#c6c6c6;letter-spacing:-0.420px">00:05.326</span>
<span style="left:869.40px;top:367.00px;font-size:11.0px;color:#c6c6c6;letter-spacing:-0.420px">sleep</span>
<span style="left:950.20px;top:367.00px;font-size:11.0px;color:#c6c6c6;letter-spacing:-0.420px">871.63 ms</span>
<span style="left:1031.00px;top:367.00px;font-size:11.0px;color:#c6c6c6;letter-spacing:-0.420px">0 µs</span>
<span style="left:1111.90px;top:367.00px;font-size:11.0px;color:#c6c6c6;letter-spacing:-0.420px">871.63 ms</span>
<span style="left:1192.70px;top:367.00px;font-size:11.0px;color:#c6c6c6;letter-spacing:-0.420px">0 µs</span>
<span style="left:789.20px;top:384.80px;font-size:11.0px;color:#c6c6c6;letter-spacing:-0.420px">00:00.250</span>
<span style="left:869.40px;top:384.80px;font-size:11.0px;color:#c6c6c6;letter-spacing:-0.420px">sleep</span>
<span style="left:950.20px;top:384.80px;font-size:11.0px;color:#c6c6c6;letter-spacing:-0.420px">237 µs</span>
<span style="left:1031.00px;top:384.80px;font-size:11.0px;color:#c6c6c6;letter-spacing:-0.420px">0 µs</span>
<span style="left:1111.90px;top:384.80px;font-size:11.0px;color:#c6c6c6;letter-spacing:-0.420px">237 µs</span>
<span style="left:1192.70px;top:384.80px;font-size:11.0px;color:#c6c6c6;letter-spacing:-0.420px">0 µs</span>
</body></html>
